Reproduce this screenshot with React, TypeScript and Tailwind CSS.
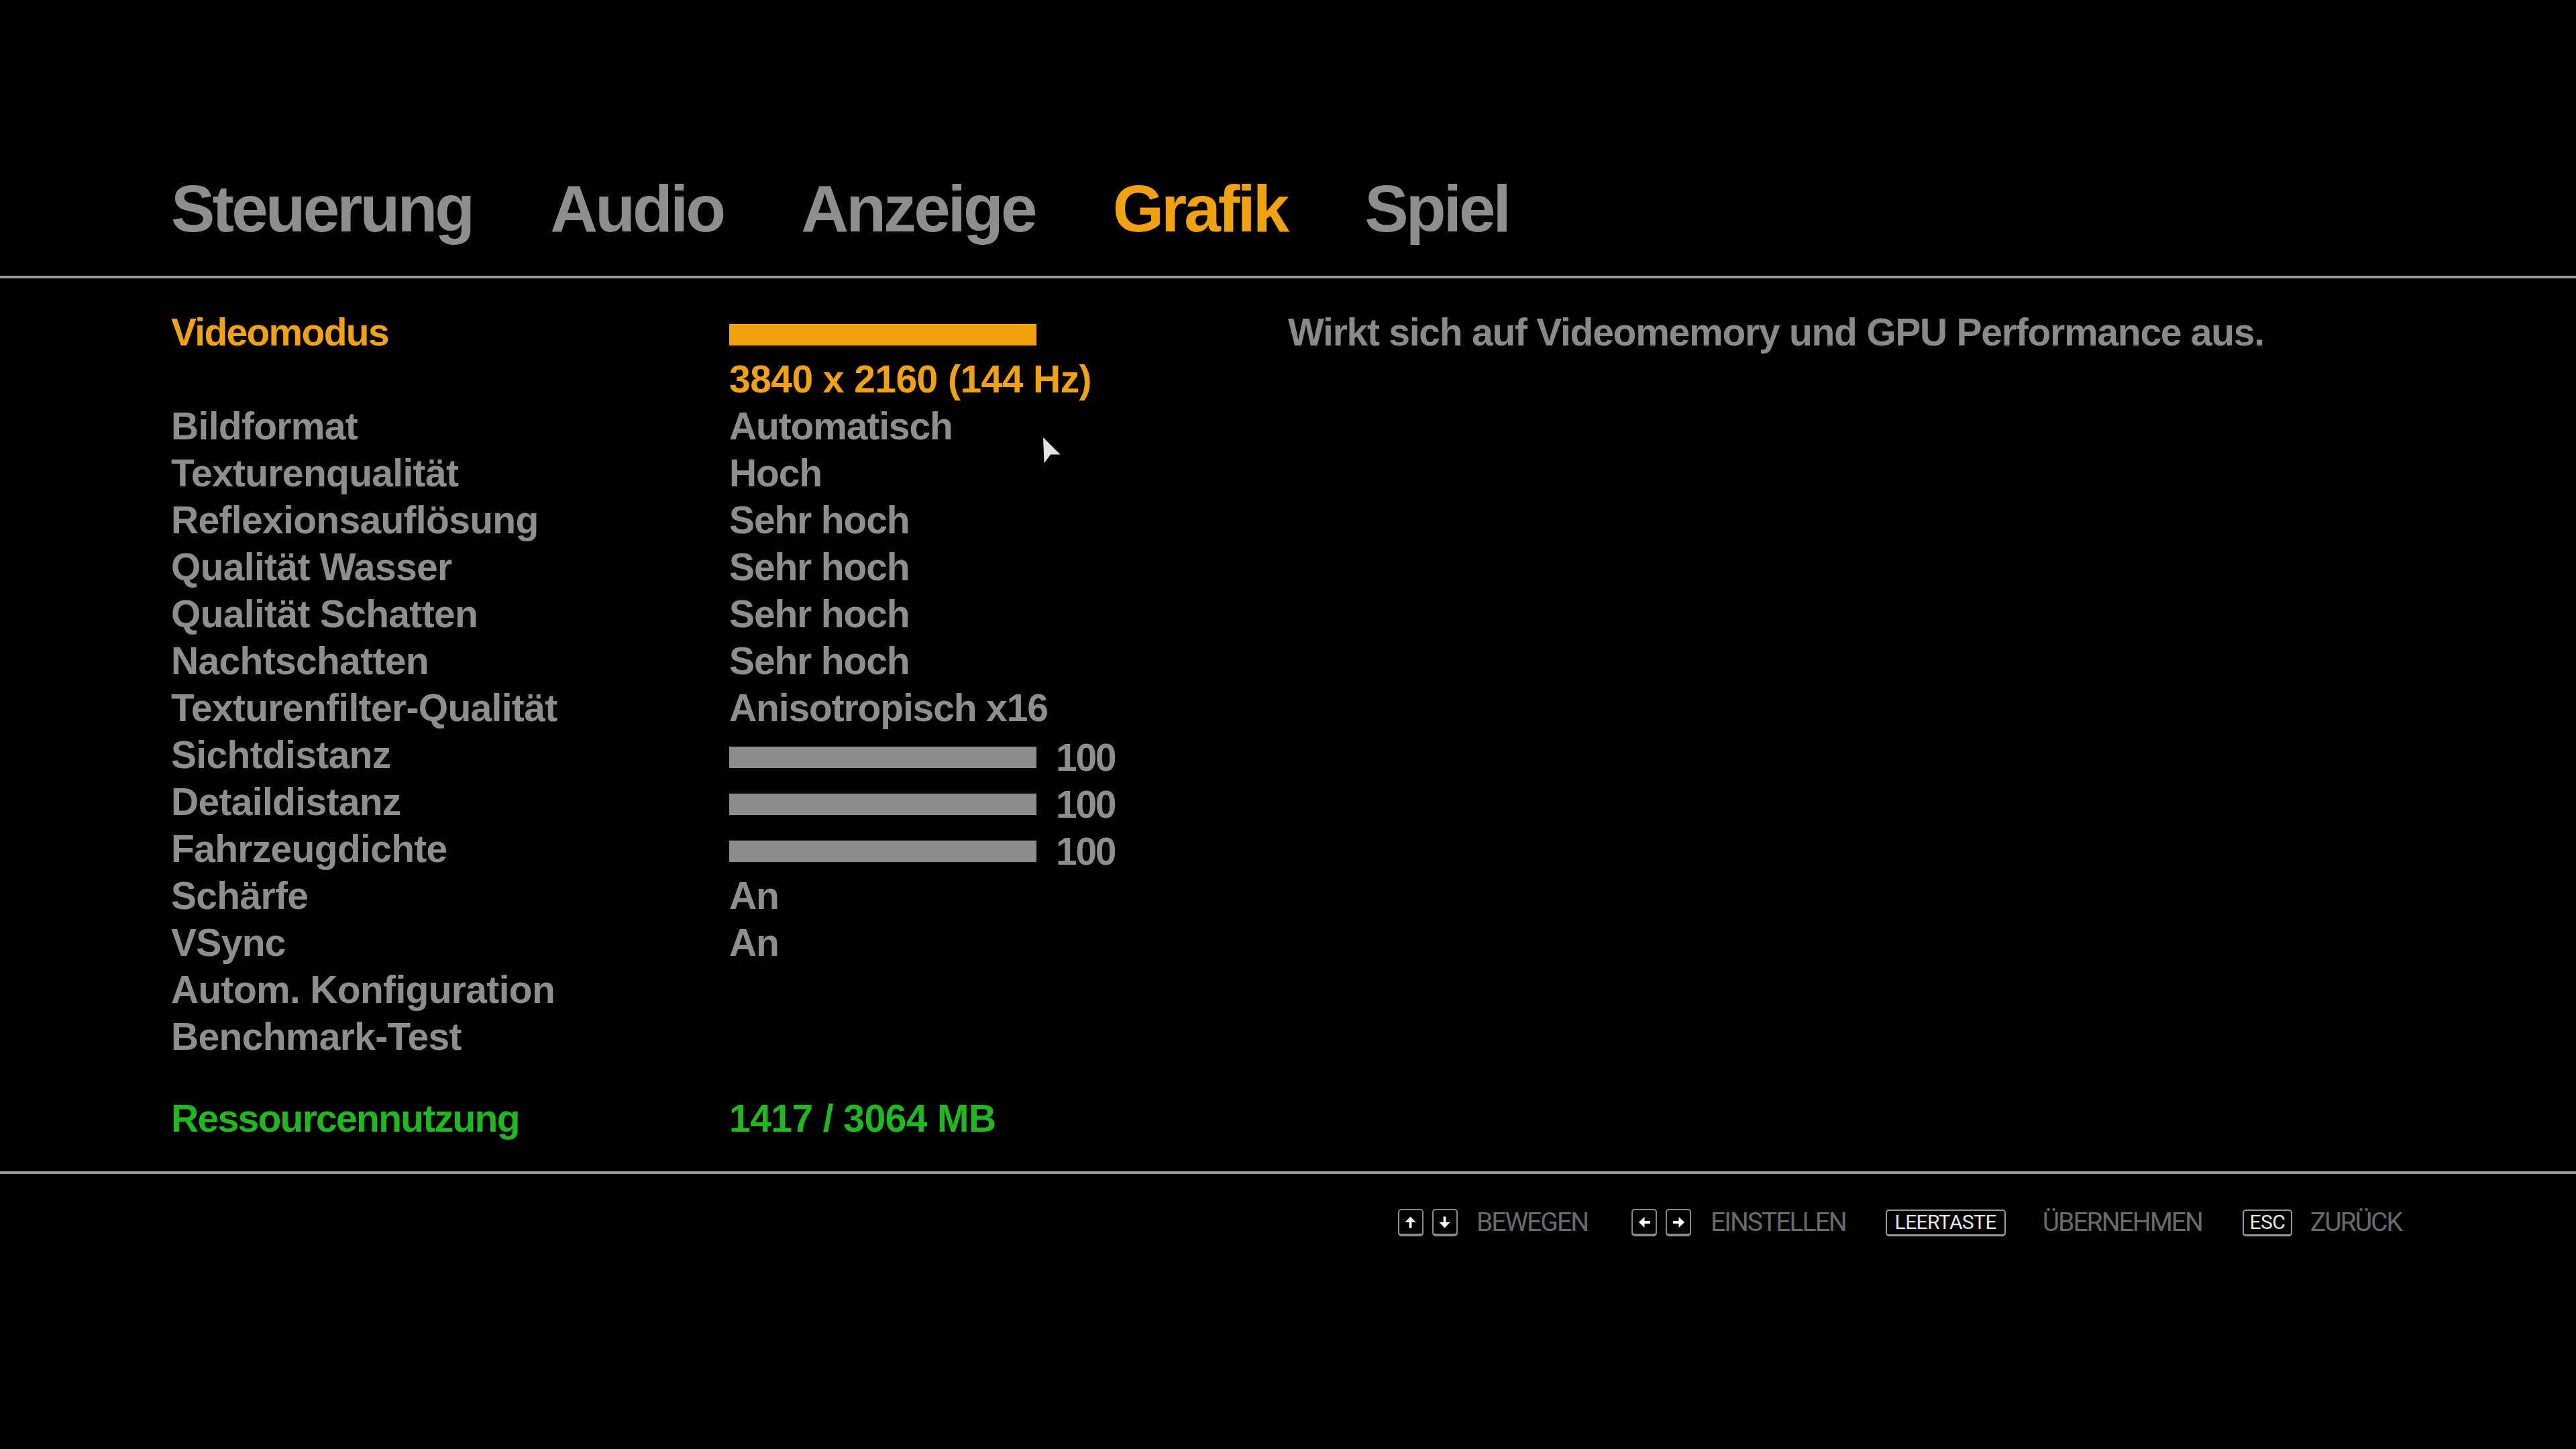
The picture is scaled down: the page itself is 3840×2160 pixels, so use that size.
import React from "react";

const ORANGE = "text-[#f1a20c]";
const GRAY = "text-[#8e8e8e]";

type Row = { label: string; value?: string; slider?: number };

const rows: Row[] = [
  { label: "Bildformat", value: "Automatisch" },
  { label: "Texturenqualität", value: "Hoch" },
  { label: "Reflexionsauflösung", value: "Sehr hoch" },
  { label: "Qualität Wasser", value: "Sehr hoch" },
  { label: "Qualität Schatten", value: "Sehr hoch" },
  { label: "Nachtschatten", value: "Sehr hoch" },
  { label: "Texturenfilter-Qualität", value: "Anisotropisch x16" },
  { label: "Sichtdistanz", slider: 100 },
  { label: "Detaildistanz", slider: 100 },
  { label: "Fahrzeugdichte", slider: 100 },
  { label: "Schärfe", value: "An" },
  { label: "VSync", value: "An" },
  { label: "Autom. Konfiguration" },
  { label: "Benchmark-Test" },
];

const tabs = ["Steuerung", "Audio", "Anzeige", "Grafik", "Spiel"];

function Arrow({ dir }: { dir: "up" | "down" | "left" | "right" }) {
  const rot = { up: 0, right: 90, down: 180, left: 270 }[dir];
  return (
    <svg width="17" height="18" viewBox="0 0 18 18" style={{ transform: `rotate(${rot}deg)` }}>
      <polygon points="9,0 17.5,9 11,9 11,18 7,18 7,9 0.5,9" fill="#ffffff" />
    </svg>
  );
}

function ArrowKey({ dir }: { dir: "up" | "down" | "left" | "right" }) {
  return (
    <div className="w-[38px] h-[41px] border-2 border-b-[4px] border-[#8a8a8a] rounded-[5px] flex items-center justify-center">
      <Arrow dir={dir} />
    </div>
  );
}

function TextKey({ label, w }: { label: string; w: string }) {
  return (
    <div
      className={`${w} h-[40px] border-2 border-b-[3px] border-[#9a9a9a] rounded-[5px] flex items-center justify-center text-[30px] leading-none text-[#e8e8e8] tracking-[-0.02em]`}
    >
      {label}
    </div>
  );
}

function Hint({ text, cls }: { text: string; cls: string }) {
  return <span className={`${cls} text-[39px] leading-none text-[#6a6a6a] tracking-[-0.05em]`}>{text}</span>;
}

export default function App() {
  return (
    <div
      className="relative w-[3840px] h-[2160px] bg-black overflow-hidden"
      style={{ fontFamily: '"Liberation Sans", Arial, sans-serif' }}
    >
      {/* tab bar */}
      <div className="flex gap-[116px] pl-[255px] pt-[262px]">
        {tabs.map((t) => (
          <div
            key={t}
            className={`text-[98px] leading-[98px] font-bold tracking-[-0.04em] ${t === "Grafik" ? ORANGE : GRAY}`}
          >
            {t}
          </div>
        ))}
      </div>
      <div className="mt-[51px] h-[4px] w-full bg-[#9a9a9a]" />

      {/* settings list */}
      <div className="mt-[45px] flex flex-col text-[57px] leading-[70px] font-bold">
        <div className="flex h-[140px]">
          <div className={`w-[1087px] pl-[255px] h-[70px] flex items-center tracking-[-0.03em] ${ORANGE}`}>
            Videomodus
          </div>
          <div className="w-[833px] flex flex-col">
            <div className="h-[70px] flex items-center">
              <div className="mt-[8px] w-[458px] h-[32px] bg-[#f1a20c]" />
            </div>
            <div className={`h-[70px] flex items-center ${ORANGE} tracking-[-0.01em]`}>3840 x 2160 (144 Hz)</div>
          </div>
          <div className="h-[70px] flex items-center text-[#8a8a8a] tracking-[-0.022em]">
            Wirkt sich auf Videomemory und GPU Performance aus.
          </div>
        </div>

        {rows.map((r) => (
          <div key={r.label} className={`flex h-[70px] items-center ${GRAY}`}>
            <div className="w-[1087px] pl-[255px] tracking-[-0.012em]">{r.label}</div>
            {r.value && <div className="tracking-[-0.02em]">{r.value}</div>}
            {r.slider !== undefined && (
              <div className="mt-[8px] flex items-center gap-[29px]">
                <div className="w-[458px] h-[32px] bg-[#8c8c8c]" />
                <span className="tracking-[-0.04em]">{r.slider}</span>
              </div>
            )}
          </div>
        ))}

        <div className="mt-[52px] flex h-[70px] items-center text-[#1fb91f]">
          <div className="w-[1087px] pl-[255px] tracking-[-0.03em]">Ressourcennutzung</div>
          <div className="tracking-[-0.01em]">1417 / 3064 MB</div>
        </div>
      </div>

      <div className="mt-[44px] h-[4px] w-full bg-[#9a9a9a]" />

      {/* instructional buttons */}
      <div
        className="mt-[52px] h-[41px] flex items-center justify-end pr-[260px]"
        style={{ fontFamily: 'Roboto, "Liberation Sans", sans-serif' }}
      >
        <ArrowKey dir="up" />
        <div className="ml-[13px]">
          <ArrowKey dir="down" />
        </div>
        <Hint text="BEWEGEN" cls="ml-[28px]" />
        <div className="ml-[65px]">
          <ArrowKey dir="left" />
        </div>
        <div className="ml-[13px]">
          <ArrowKey dir="right" />
        </div>
        <Hint text="EINSTELLEN" cls="ml-[29px]" />
        <div className="ml-[59px]">
          <TextKey label="LEERTASTE" w="w-[179px]" />
        </div>
        <Hint text="ÜBERNEHMEN" cls="ml-[55px]" />
        <div className="ml-[60px]">
          <TextKey label="ESC" w="w-[74px]" />
        </div>
        <Hint text="ZURÜCK" cls="ml-[27px]" />
      </div>

      {/* mouse pointer */}
      <svg
        className="absolute left-[1555px] top-[652px]"
        width="27"
        height="40"
        viewBox="0 0 27 40"
      >
        <polygon points="0,0 25.5,25.5 11,25.5 1.5,38.5" fill="#e4e4e4" />
      </svg>
    </div>
  );
}
